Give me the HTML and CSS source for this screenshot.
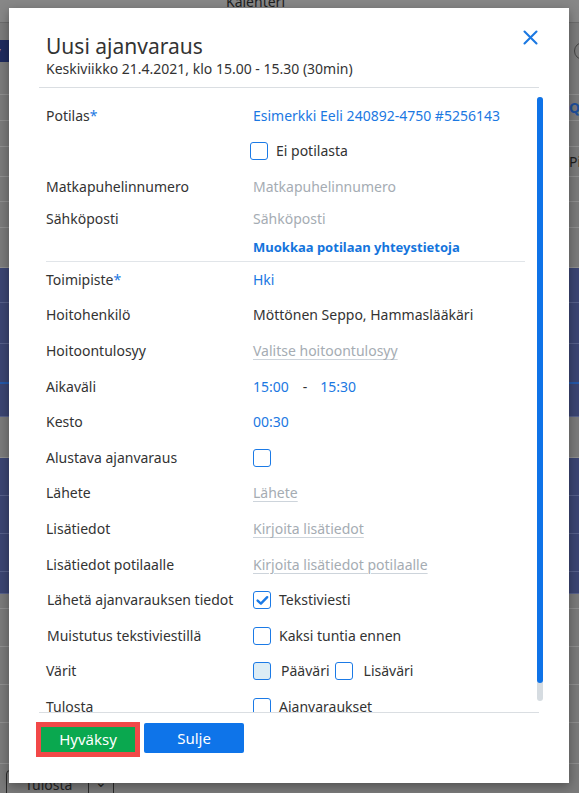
FILE: index.html
```html
<!DOCTYPE html>
<html lang="fi">
<head>
<meta charset="utf-8">
<title>Uusi ajanvaraus</title>
<link rel="stylesheet" href="styles.css">
</head>
<body>
<div class="app">
  <div class="app-top"><span class="app-title">Kalenteri</span></div>
  <div class="app-toolbar">
    <span class="nav-btn">Ajanv</span>
    <span class="round-btn"></span>
  </div>
  <div class="band gray h26"><span class="r-q">Q</span></div>
  <div class="band gray h26"></div>
  <div class="band gray h30"><span class="r-text">Pi</span></div>
  <div class="band gray h25"></div>
  <div class="band gray h26"></div>
  <div class="band gray h40"></div>
  <div class="band blue h35"></div>
  <div class="band blue h41"></div>
  <div class="band blue h40 accent"></div>
  <div class="band blue h33"></div>
  <div class="band gray h41"></div>
  <div class="band blue h38"></div>
  <div class="band blue h38"></div>
  <div class="band blue h38"></div>
  <div class="band blue h22"></div>
  <div class="band gray h15"></div>
  <div class="band gray h38"></div>
  <div class="band gray h38"></div>
  <div class="band gray h38"></div>
  <div class="band gray h41"></div>
  <div class="band gray bottom">
    <span class="print-btn"><span class="print-label">Tulosta</span><span class="print-caret">&#8964;</span></span>
  </div>
</div>

<div class="modal">
  <div class="modal-header">
    <h1 class="modal-title">Uusi ajanvaraus</h1>
    <div class="modal-subtitle">Keskiviikko 21.4.2021, klo 15.00 - 15.30 (30min)</div>
    <span class="close-btn">
      <svg width="15" height="15" viewBox="0 0 15 15"><path d="M1.5 1.5 L13.5 13.5 M13.5 1.5 L1.5 13.5" stroke="#1b78e2" stroke-width="2.1" fill="none" stroke-linecap="round"/></svg>
    </span>
  </div>

  <div class="modal-body">
    <div class="content">
      <div class="row r36">
        <span class="label">Potilas<span class="req">*</span></span>
        <span class="value link">Esimerkki Eeli 240892-4750 #5256143</span>
      </div>
      <div class="row r34">
        <span class="label"></span>
        <span class="value check-line shift"><span class="cb"></span><span>Ei potilasta</span></span>
      </div>
      <div class="row r37">
        <span class="label">Matkapuhelinnumero</span>
        <span class="value placeholder">Matkapuhelinnumero</span>
      </div>
      <div class="row r28">
        <span class="label">Sähköposti</span>
        <span class="value placeholder">Sähköposti</span>
      </div>
      <div class="row r27">
        <span class="label"></span>
        <span class="value edit-link">Muokkaa potilaan yhteystietoja</span>
      </div>

      <div class="group">
        <div class="row">
          <span class="label">Toimipiste<span class="req">*</span></span>
          <span class="value link">Hki</span>
        </div>
        <div class="row">
          <span class="label">Hoitohenkilö</span>
          <span class="value">Möttönen Seppo, Hammaslääkäri</span>
        </div>
        <div class="row">
          <span class="label">Hoitoontulosyy</span>
          <span class="value"><span class="input-ph">Valitse hoitoontulosyy</span></span>
        </div>
        <div class="row">
          <span class="label">Aikaväli</span>
          <span class="value link time"><span>15:00</span><span class="dash">-</span><span>15:30</span></span>
        </div>
        <div class="row">
          <span class="label">Kesto</span>
          <span class="value link">00:30</span>
        </div>
        <div class="row">
          <span class="label">Alustava ajanvaraus</span>
          <span class="value check-line"><span class="cb"></span></span>
        </div>
        <div class="row">
          <span class="label">Lähete</span>
          <span class="value"><span class="input-ph">Lähete</span></span>
        </div>
        <div class="row">
          <span class="label">Lisätiedot</span>
          <span class="value"><span class="input-ph">Kirjoita lisätiedot</span></span>
        </div>
        <div class="row">
          <span class="label">Lisätiedot potilaalle</span>
          <span class="value"><span class="input-ph">Kirjoita lisätiedot potilaalle</span></span>
        </div>
        <div class="row">
          <span class="label nudge">Lähetä ajanvarauksen tiedot</span>
          <span class="value check-line">
            <span class="cb checked"><svg width="15" height="15" viewBox="0 0 15 15"><path d="M2.6 7.6 L5.9 10.6 L12.2 4.2" stroke="#1b7ae6" stroke-width="2.4" fill="none" stroke-linecap="round" stroke-linejoin="round"/></svg></span>
            <span>Tekstiviesti</span>
          </span>
        </div>
        <div class="row">
          <span class="label nudge">Muistutus tekstiviestillä</span>
          <span class="value check-line"><span class="cb"></span><span>Kaksi tuntia ennen</span></span>
        </div>
        <div class="row">
          <span class="label">Värit</span>
          <span class="value check-line colors">
            <span class="cb filled"></span><span class="main-col">Pääväri</span>
            <span class="cb"></span><span class="extra-col">Lisäväri</span>
          </span>
        </div>
        <div class="row">
          <span class="label">Tulosta</span>
          <span class="value check-line"><span class="cb"></span><span>Ajanvaraukset</span></span>
        </div>
      </div>
    </div>
    <div class="scrollbar">
      <div class="scroll-track"><div class="scroll-thumb"></div></div>
    </div>
  </div>

  <div class="modal-footer">
    <button class="btn btn-accept" type="button">Hyväksy</button>
    <button class="btn btn-close" type="button">Sulje</button>
  </div>
</div>
</body>
</html>
```

FILE: styles.css
```css
* { box-sizing: border-box; }

html, body {
  margin: 0;
  padding: 0;
}

body {
  width: 579px;
  height: 793px;
  overflow: hidden;
  position: relative;
  background: #7a7a7a;
  font-family: "Noto Sans", "Open Sans", sans-serif;
  color: #333;
}

/* ---------- dimmed application behind the dialog ---------- */
.app {
  display: flex;
  flex-direction: column;
  width: 579px;
}

.app-top {
  height: 23px;
  background: #878787;
  border-bottom: 1px solid #6c6c6c;
  display: flex;
  justify-content: center;
  overflow: hidden;
}

.app-title {
  font-size: 14px;
  line-height: 14px;
  margin-top: -5px;
  margin-left: -68px;
  color: #1e1e1e;
}

.app-toolbar {
  height: 72px;
  background: #7b7b7b;
  border-bottom: 1px solid #8e8e8e;
  display: flex;
  align-items: flex-start;
  justify-content: space-between;
  padding-top: 17px;
}

.nav-btn {
  display: block;
  height: 22px;
  width: 60px;
  margin-left: -51px;
  background: #1f2b5e;
  color: #b9c1d8;
  font-size: 13px;
  line-height: 22px;
  padding-left: 18px;
  overflow: hidden;
  white-space: nowrap;
}

.round-btn {
  display: block;
  width: 18px;
  height: 18px;
  border: 1.5px solid #444;
  border-radius: 50%;
  margin-right: -13px;
  margin-top: 2px;
}

.band {
  display: flex;
  justify-content: flex-end;
  align-items: center;
  border-bottom: 1px solid #8f8f8f;
  overflow: hidden;
}

.band.gray { background: #7a7a7a; }
.band.blue { background: #3b4572; border-bottom-color: #56608a; }
.band.accent { border-bottom: 2px solid #2458a8; }

.h15 { height: 15px; }
.h22 { height: 22px; }
.h25 { height: 25px; }
.h26 { height: 26px; }
.h30 { height: 30px; }
.h33 { height: 33px; }
.h35 { height: 35px; }
.h38 { height: 38px; }
.h40 { height: 40px; }
.h41 { height: 41px; }

.r-q {
  width: 10px;
  font-size: 14px;
  font-weight: 700;
  color: #1e4f9a;
  overflow: hidden;
}

.r-text {
  width: 10px;
  font-size: 14px;
  color: #1d1d1d;
  overflow: hidden;
  white-space: nowrap;
}

.band.bottom {
  height: 40px;
  border-bottom: none;
  justify-content: flex-start;
  align-items: flex-start;
  padding-top: 6px;
  padding-left: 6px;
}

.print-btn {
  display: flex;
  height: 30px;
  border: 1px solid #2a2a2a;
  border-radius: 4px;
  font-size: 14px;
  color: #222;
}

.print-label {
  padding: 4px 16px 0 18px;
  border-right: 1px solid #2a2a2a;
}

.print-caret {
  padding: 0 6px;
  line-height: 22px;
}

/* ---------- dialog ---------- */
.modal {
  position: absolute;
  left: 9px;
  top: 8px;
  width: 560px;
  height: 775px;
  background: #fff;
  box-shadow: 0 3px 10px rgba(0, 0, 0, 0.35);
  padding: 0 30px;
  display: flex;
  flex-direction: column;
}

.modal-header {
  position: relative;
  padding: 25px 7px 8px;
  border-bottom: 1px solid #dadee2;
  flex: none;
}

.modal-title {
  margin: 0;
  font-size: 21px;
  line-height: 26px;
  font-weight: 400;
  color: #333;
}

.modal-subtitle {
  font-size: 14px;
  line-height: 20px;
  color: #333;
}

.close-btn {
  position: absolute;
  right: 1px;
  top: 22px;
  width: 15px;
  height: 15px;
  display: block;
}

.close-btn svg { display: block; }

.modal-body {
  flex: 1;
  min-height: 0;
  display: flex;
  margin-right: -4px;
}

.content {
  flex: 1;
  min-width: 0;
  overflow: hidden;
  padding: 10px 12px 6px 7px;
}

.scrollbar {
  flex: none;
  width: 6px;
  padding: 9px 0 11px;
  display: flex;
  flex-direction: column;
}

.scroll-track {
  flex: 1;
  background: #d6dce1;
  border-radius: 3px;
}

.scroll-thumb {
  height: 586px;
  background: #0e73e8;
  border-radius: 3px;
}

.row {
  display: grid;
  grid-template-columns: 207px 1fr;
  align-items: center;
  height: 35.6px;
  font-size: 14px;
  line-height: 18px;
}

.r37 { height: 37px; }
.r36 { height: 36px; }
.r34 { height: 34px; }
.r28 { height: 28px; }
.r27 { height: 27px; }

.group {
  margin-top: 1px;
  border-top: 1px solid #e1e5e9;
}

.label {
  color: #333;
  white-space: nowrap;
}

.label.nudge { padding-left: 1px; }

.req { color: #1b78e2; }

.value {
  color: #333;
  white-space: nowrap;
}

.link { color: #1b78e2; }

.placeholder { color: #a5acb3; }

.edit-link {
  color: #1474dc;
  font-weight: 700;
  font-size: 13px;
}

.input-ph {
  color: #a5acb3;
  text-decoration: underline;
  text-decoration-color: #cdd4db;
  text-decoration-thickness: 1px;
  text-underline-offset: 3px;
}

.time {
  display: flex;
}

.dash {
  margin: 0 13px 0 14px;
  color: #333;
}

.check-line {
  display: flex;
  align-items: center;
}

.check-line.shift { margin-left: -3px; }

.cb {
  flex: none;
  width: 18px;
  height: 18px;
  border: 1.5px solid #1b7ae6;
  border-radius: 3px;
  background: #fff;
  margin-right: 8px;
  display: flex;
  align-items: center;
  justify-content: center;
}

.cb svg { display: block; }

.cb.filled { background: #ddedf5; margin-right: 10px; }

.main-col { margin-right: 5px; }

.colors .cb + .extra-col { margin-left: 3px; }

/* ---------- footer ---------- */
.modal-footer {
  flex: none;
  height: 71px;
  border-top: 1px solid #dadee2;
  display: flex;
  align-items: flex-start;
  padding-top: 10px;
  padding-left: 2px;
}

.btn {
  border: none;
  color: #fff;
  font-family: "Noto Sans", "Open Sans", sans-serif;
  font-size: 15px;
  padding: 0;
  cursor: pointer;
}

.btn-accept {
  width: 94px;
  height: 25px;
  margin-top: 4px;
  background: #0aa84f;
  outline: 5px solid #f24848;
  line-height: 25px;
}

.btn-close {
  width: 100px;
  height: 30px;
  margin-left: 9px;
  background: #0e74e9;
  border-radius: 2px;
  line-height: 30px;
}
```
